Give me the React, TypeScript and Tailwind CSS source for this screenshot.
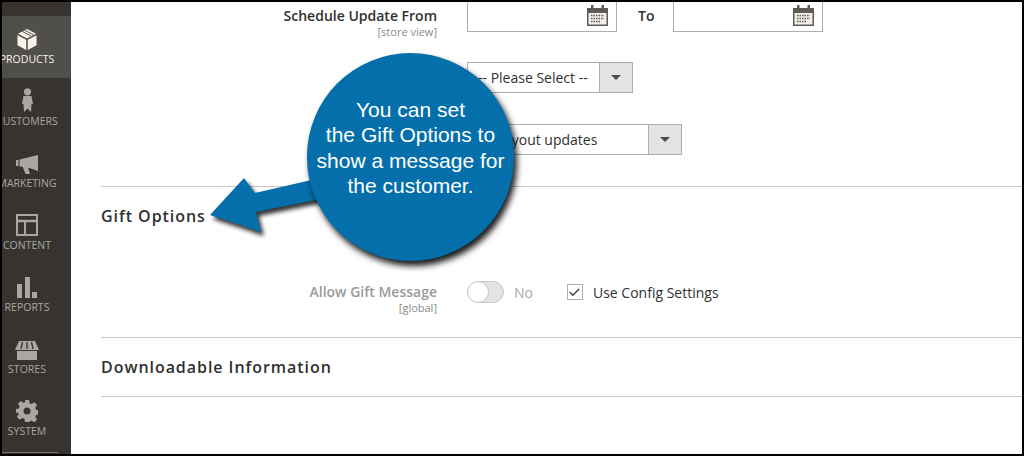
import React from 'react';
import { Check } from 'lucide-react';

const openSans = { fontFamily: '"Open Sans", sans-serif' };

function ProductsIcon() {
  return (
    <svg width="20" height="21" viewBox="0 0 20 22">
      <path d="M10 0 19.500 5 10 10 .5 5Z" fill="#f7f3eb" />
      <path d="M0 6.500 9.200 11.200V22L0 17Z" fill="#f7f3eb" />
      <path d="M20 6.500 10.800 11.200V22L20 17Z" fill="#f7f3eb" />
      <path d="M5 2.500 14.500 7.500M7.500 1.200 17 6.200" stroke="#514f4a" strokeWidth="1" />
    </svg>
  );
}

function CustomersIcon() {
  return (
    <svg width="11" height="24" viewBox="0 0 11 24" fill="#aaa6a0">
      <circle cx="5.500" cy="3.800" r="3.600" />
      <path d="M1.500 8h8L11 16H9.500L9 24 5.500 20.500 2 24l-.5-8H0Z" />
    </svg>
  );
}

function MarketingIcon() {
  return (
    <svg width="22" height="19" viewBox="0 0 22 19" fill="#aaa6a0">
      <path d="M0 5h2.500v6H0ZM3.500 4.500 22 0v16L12 12.500 14 19H9.500L6.500 11.500h-3Z" />
    </svg>
  );
}

function ContentIcon() {
  return (
    <svg width="22" height="22" viewBox="0 0 22 22" fill="none" stroke="#aaa6a0">
      <rect x="1" y="1" width="20" height="20" strokeWidth="2" />
      <path d="M1 7h20" strokeWidth="2.500" />
      <path d="M9 7v14" strokeWidth="2" />
    </svg>
  );
}

function ReportsIcon() {
  return (
    <svg width="20" height="21" viewBox="0 0 20 21" fill="#aaa6a0">
      <rect x="0" y="7" width="5" height="14" />
      <rect x="8" y="0" width="5" height="21" />
      <rect x="15" y="15" width="5" height="6" />
    </svg>
  );
}

function StoresIcon() {
  return (
    <svg width="24" height="19" viewBox="0 0 24 19" fill="#aaa6a0">
      <path d="M4 0h16l4 9H0Z" />
      <path d="M7.500 1 6 8M12 1v7M16.500 1 18 8" stroke="#373330" strokeWidth="1.300" />
      <rect x="2" y="10" width="20" height="9" />
    </svg>
  );
}

function SystemIcon() {
  return (
    <svg width="22" height="22" viewBox="0 0 22 22" fill="#aaa6a0">
      <path
        fillRule="evenodd"
        d="M9 0h4l.6 3.200 2 .8 2.700-1.800 2.800 2.800-1.800 2.700.8 2 3.200.6v4l-3.200.6-.8 2 1.800 2.700-2.800 2.800-2.700-1.800-2 .8L13 22H9l-.6-3.200-2-.8-2.700 1.800-2.800-2.800 1.800-2.700-.8-2L-.3 13V9l3.200-.6.8-2-1.800-2.700 2.800-2.800 2.700 1.800 2-.8ZM11 7.500a3.500 3.500 0 1 0 0 7 3.500 3.500 0 0 0 0-7Z"
      />
    </svg>
  );
}

function CalendarIcon() {
  return (
    <svg width="21" height="21" viewBox="0 0 21 21">
      <rect x="0" y="3" width="21" height="18" fill="#5f5a54" />
      <rect x="1.500" y="8" width="18" height="11.500" fill="#f1efe9" />
      <rect x="4" y="0" width="2.500" height="6" fill="#5f5a54" />
      <rect x="14.500" y="0" width="2.500" height="6" fill="#5f5a54" />
      <path d="M4 10.500h13M4 13.500h13M4 16.500h10" stroke="#5f5a54" strokeWidth="1.500" strokeDasharray="1.500 1" />
    </svg>
  );
}

function SelectBox({ width, pad, text }: { width: string; pad: string; text: string }) {
  return (
    <div className={`flex h-[31px] ${width} border border-[#adadad] bg-white`}>
      <span className={`flex-1 ${pad} text-[14px] leading-[30px] text-[#303030] whitespace-nowrap overflow-hidden`}>{text}</span>
      <span className="flex w-[33px] items-center justify-center border-l border-[#adadad] bg-[#e3e3e3]">
        <span className="h-0 w-0 border-x-[5px] border-t-[5px] border-x-transparent border-t-[#514943]" />
      </span>
    </div>
  );
}

function DateInput() {
  return (
    <div className="flex h-[30px] w-[150px] items-start justify-end border border-t-0 border-[#adadad] bg-white pt-[3px] pr-[8px]">
      <CalendarIcon />
    </div>
  );
}

const navItems = [
  { label: 'Products', icon: <ProductsIcon />, active: true },
  { label: 'Customers', icon: <CustomersIcon /> },
  { label: 'Marketing', icon: <MarketingIcon /> },
  { label: 'Content', icon: <ContentIcon /> },
  { label: 'Reports', icon: <ReportsIcon /> },
  { label: 'Stores', icon: <StoresIcon /> },
  { label: 'System', icon: <SystemIcon /> },
];

export default function App() {
  return (
    <div className="relative flex h-[456px] w-[1024px] overflow-hidden border-2 border-black bg-white" style={openSans}>
      {/* SIDEBAR */}
      <aside className="flex w-[69px] shrink-0 flex-col overflow-hidden bg-[#373330] pt-[14px]">
        {navItems.map((item) => (
          <div
            key={item.label}
            className={`h-[62px] w-[69px] ${item.active ? 'bg-[#514f4a] text-[#f7f3eb]' : 'text-[#aaa6a0]'}`}
          >
            <div className="flex h-[36px] w-[50px] items-end justify-center pb-[2px]">{item.icon}</div>
            <div className="flex w-[50px] justify-center text-[10.5px] leading-[15px] uppercase whitespace-nowrap">
              {item.label}
            </div>
          </div>
        ))}
        <div className="mt-[2px] h-px w-[56px] bg-[#736e68]" />
      </aside>

      {/* FORM */}
      <main className="flex-1 pl-[30px] text-[#303030]">
        <section className="flex flex-col border-b border-[#c9c9c9] pb-[31px]">
          <div className="flex h-[30px] items-start">
            <div className="flex w-[336px] flex-col items-end pt-[5px]">
              <span className="text-[14px] leading-[18px] font-semibold">Schedule Update From</span>
              <span className="text-[11px] leading-[13px] text-[#8a8a8a]">[store view]</span>
            </div>
            <div className="ml-[30px] flex items-start">
              <DateInput />
              <span className="w-[56px] pt-[4px] pl-[21px] text-[14px] leading-[20px] font-semibold">To</span>
              <DateInput />
            </div>
          </div>
          <div className="mt-[30px] pl-[366px]">
            <SelectBox width="w-[166px]" pad="pl-[10px]" text="-- Please Select --" />
          </div>
          <div className="mt-[31px] pl-[366px]">
            <SelectBox width="w-[215px]" pad="pl-[4px]" text="Use layout updates" />
          </div>
        </section>

        <section className="border-b border-[#c9c9c9] pb-[23px]">
          <h2 className="mt-[18px] text-[16px] leading-[22px] font-semibold tracking-[0.95px] text-[#303030]">Gift Options</h2>
          <div className="mt-[56px] flex items-start">
            <div className="flex w-[336px] flex-col items-end">
              <span className="text-[14px] leading-[18px] font-semibold text-[#9a9a9a]">Allow Gift Message</span>
              <span className="text-[11px] leading-[13px] text-[#8a8a8a]">[global]</span>
            </div>
            <div className="-mt-[2px] ml-[30px] flex items-center">
              <div className="relative h-[22px] w-[37px] rounded-full border border-[#c9c9c9] bg-[#e3e3e3]">
                <div className="absolute top-[-1px] left-[-1px] h-[22px] w-[22px] rounded-full border border-[#c9c9c9] bg-white" />
              </div>
              <span className="ml-[10px] text-[14px] text-[#a8a8a8]">No</span>
              <div className="ml-[34px] flex h-[16px] w-[16px] items-center justify-center border border-[#adadad] bg-white">
                <Check size={13} strokeWidth={3} color="#514943" />
              </div>
              <span className="ml-[10px] text-[14px] text-[#303030]">Use Config Settings</span>
            </div>
          </div>
        </section>

        <section className="border-b border-[#c9c9c9] pb-[18px]">
          <h2 className="mt-[18px] text-[16px] leading-[22px] font-semibold tracking-[0.95px] text-[#303030]">Downloadable Information</h2>
        </section>
      </main>

      {/* CALLOUT */}
      <svg className="absolute top-[-2px] left-[-2px] pointer-events-none" width="340" height="250" viewBox="0 0 340 250">
        <path d="M210 215 244 178 255 193 320 178V199L256 212 261 232Z" fill="#111" opacity="0.85" transform="translate(3 4)" style={{ filter: 'blur(2px)' }} />
        <path d="M210 215 244 178 255 193 320 178V199L256 212 261 232Z" fill="#046faa" />
      </svg>
      <div
        className="absolute top-[51px] left-[305px] flex h-[208px] w-[207px] flex-col items-center rounded-full bg-[#046faa] pt-[44px] text-center text-[21px] leading-[25.300px] text-white shadow-[3px_5px_6px_rgba(0,0,0,0.9)]"
        style={{ fontFamily: '"Liberation Sans", Arial, sans-serif' }}
      >
        <span>You can set</span>
        <span>the Gift Options to</span>
        <span>show a message for</span>
        <span>the customer.</span>
      </div>
    </div>
  );
}
